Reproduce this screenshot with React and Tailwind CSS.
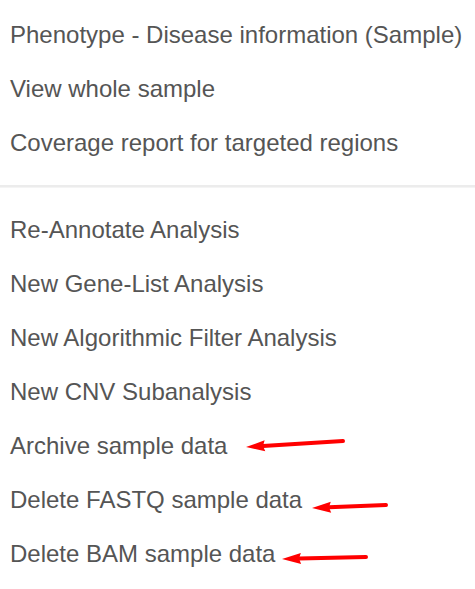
import React from "react";

const top = [
  "Phenotype - Disease information (Sample)",
  "View whole sample",
  "Coverage report for targeted regions",
];
const bottom = [
  "Re-Annotate Analysis",
  "New Gene-List Analysis",
  "New Algorithmic Filter Analysis",
  "New CNV Subanalysis",
  "Archive sample data",
  "Delete FASTQ sample data",
  "Delete BAM sample data",
];

function Item({ children }) {
  return (
    <div className="h-[54px] flex items-center pl-[10px] text-[24px] text-[#555555] whitespace-nowrap">
      {children}
    </div>
  );
}

function Arrow({ x1, y1, x2, y2 }) {
  const dx = x2 - x1;
  const dy = y2 - y1;
  const len = Math.sqrt(dx * dx + dy * dy);
  const ux = dx / len;
  const uy = dy / len;
  const hl = 19;
  const hw = 5.5;
  const bx = x1 + ux * hl;
  const by = y1 + uy * hl;
  const px = -uy;
  const py = ux;
  return (
    <g>
      <line
        x1={bx - ux * 2}
        y1={by - uy * 2}
        x2={x2}
        y2={y2}
        stroke="#ff0000"
        strokeWidth="4"
        strokeLinecap="round"
      />
      <polygon
        points={`${x1},${y1} ${bx + px * hw},${by + py * hw} ${bx - ux * 2},${by - uy * 2} ${bx - px * hw},${by - py * hw}`}
        fill="#ff0000"
      />
    </g>
  );
}

export default function App() {
  return (
    <div
      className="relative w-[475px] h-[589px] bg-white overflow-hidden"
      style={{ fontFamily: '"Liberation Sans", Arial, sans-serif' }}
    >
      <div className="pt-[8px]">
        {top.map((t) => (
          <Item key={t}>{t}</Item>
        ))}
      </div>
      <div className="mt-[15px] h-[3px] bg-[#ececec] border-b border-[#f4f4f4]" />
      <div className="mt-[15px]">
        {bottom.map((t) => (
          <Item key={t}>{t}</Item>
        ))}
      </div>
      <svg
        className="absolute inset-0 pointer-events-none"
        width="475"
        height="589"
        viewBox="0 0 475 589"
      >
        <Arrow x1={246} y1={447} x2={343} y2={441} />
        <Arrow x1={312} y1={508} x2={386} y2={505} />
        <Arrow x1={282} y1={559} x2={366} y2={557} />
      </svg>
    </div>
  );
}
